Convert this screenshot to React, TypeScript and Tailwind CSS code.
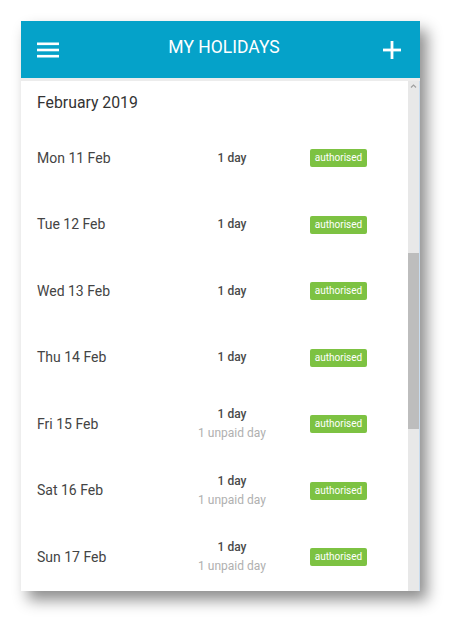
import React from 'react'

type Holiday = {
  date: string
  unpaid?: boolean
}

const holidays: Holiday[] = [
  { date: 'Mon 11 Feb' },
  { date: 'Tue 12 Feb' },
  { date: 'Wed 13 Feb' },
  { date: 'Thu 14 Feb' },
  { date: 'Fri 15 Feb', unpaid: true },
  { date: 'Sat 16 Feb', unpaid: true },
  { date: 'Sun 17 Feb', unpaid: true },
]

function MenuIcon() {
  return (
    <svg width="22" height="16" viewBox="0 0 22 16" aria-hidden>
      <rect x="0" y="0.5" width="22" height="2.6" fill="white" />
      <rect x="0" y="6.7" width="22" height="2.6" fill="white" />
      <rect x="0" y="12.9" width="22" height="2.6" fill="white" />
    </svg>
  )
}

function PlusIcon() {
  return (
    <svg width="18" height="18" viewBox="0 0 18 18" aria-hidden>
      <rect x="7.6" y="0" width="2.8" height="18" fill="white" />
      <rect x="0" y="7.6" width="18" height="2.8" fill="white" />
    </svg>
  )
}

function HolidayRow({ date, unpaid }: Holiday) {
  return (
    <div className="flex h-[66.5px] items-center">
      <div className="w-[143px] pl-4 text-[14px] text-[#444]">{date}</div>
      <div className="flex w-[136px] flex-col items-center">
        <span className="text-[12px] font-medium leading-[19px] text-[#4a4a4a]">1 day</span>
        {unpaid && (
          <span className="text-[12px] leading-[19px] text-[#b0b0b0]">1 unpaid day</span>
        )}
      </div>
      <div className="flex w-[77px] justify-center">
        <span className="rounded-[2px] bg-[#7dc242] px-[5px] py-[3px] text-[10px] leading-[12px] text-white">
          authorised
        </span>
      </div>
    </div>
  )
}

export default function App() {
  return (
    <div className="h-[634px] w-[462px] bg-white pl-[21px] pt-[21px] font-['Roboto',sans-serif]">
      <div className="flex h-[570px] w-[399px] flex-col bg-white shadow-[7px_9px_14px_rgba(0,0,0,0.45)]">
        <header className="flex h-[57px] shrink-0 items-center justify-between bg-[#05a2c9] pl-4 pr-[19px]">
          <MenuIcon />
          <h1 className="-mt-[4px] ml-[6px] text-[17.5px] font-normal text-white">MY HOLIDAYS</h1>
          <PlusIcon />
        </header>
        <div className="h-[3px] shrink-0 bg-[#ececec]" />
        <div className="flex min-h-0 flex-1">
          <div className="flex-1 overflow-hidden">
            <div className="flex h-[44px] items-center pl-4 text-[15.8px] text-[#333]">
              February 2019
            </div>
            {holidays.map((h) => (
              <HolidayRow key={h.date} {...h} />
            ))}
          </div>
          <div className="flex w-[12px] shrink-0 flex-col border-r border-[#c9dcee] bg-[#e8e8e8]">
            <svg width="11" height="8" viewBox="0 0 11 8" className="mt-[1px]" aria-hidden>
              <path d="M3 5.5 L5.5 3 L8 5.5" stroke="#a0a0a0" strokeWidth="1.2" fill="none" />
            </svg>
            <div className="mt-[163px] h-[176px] bg-[#bdbdbd]" />
          </div>
        </div>
      </div>
    </div>
  )
}
